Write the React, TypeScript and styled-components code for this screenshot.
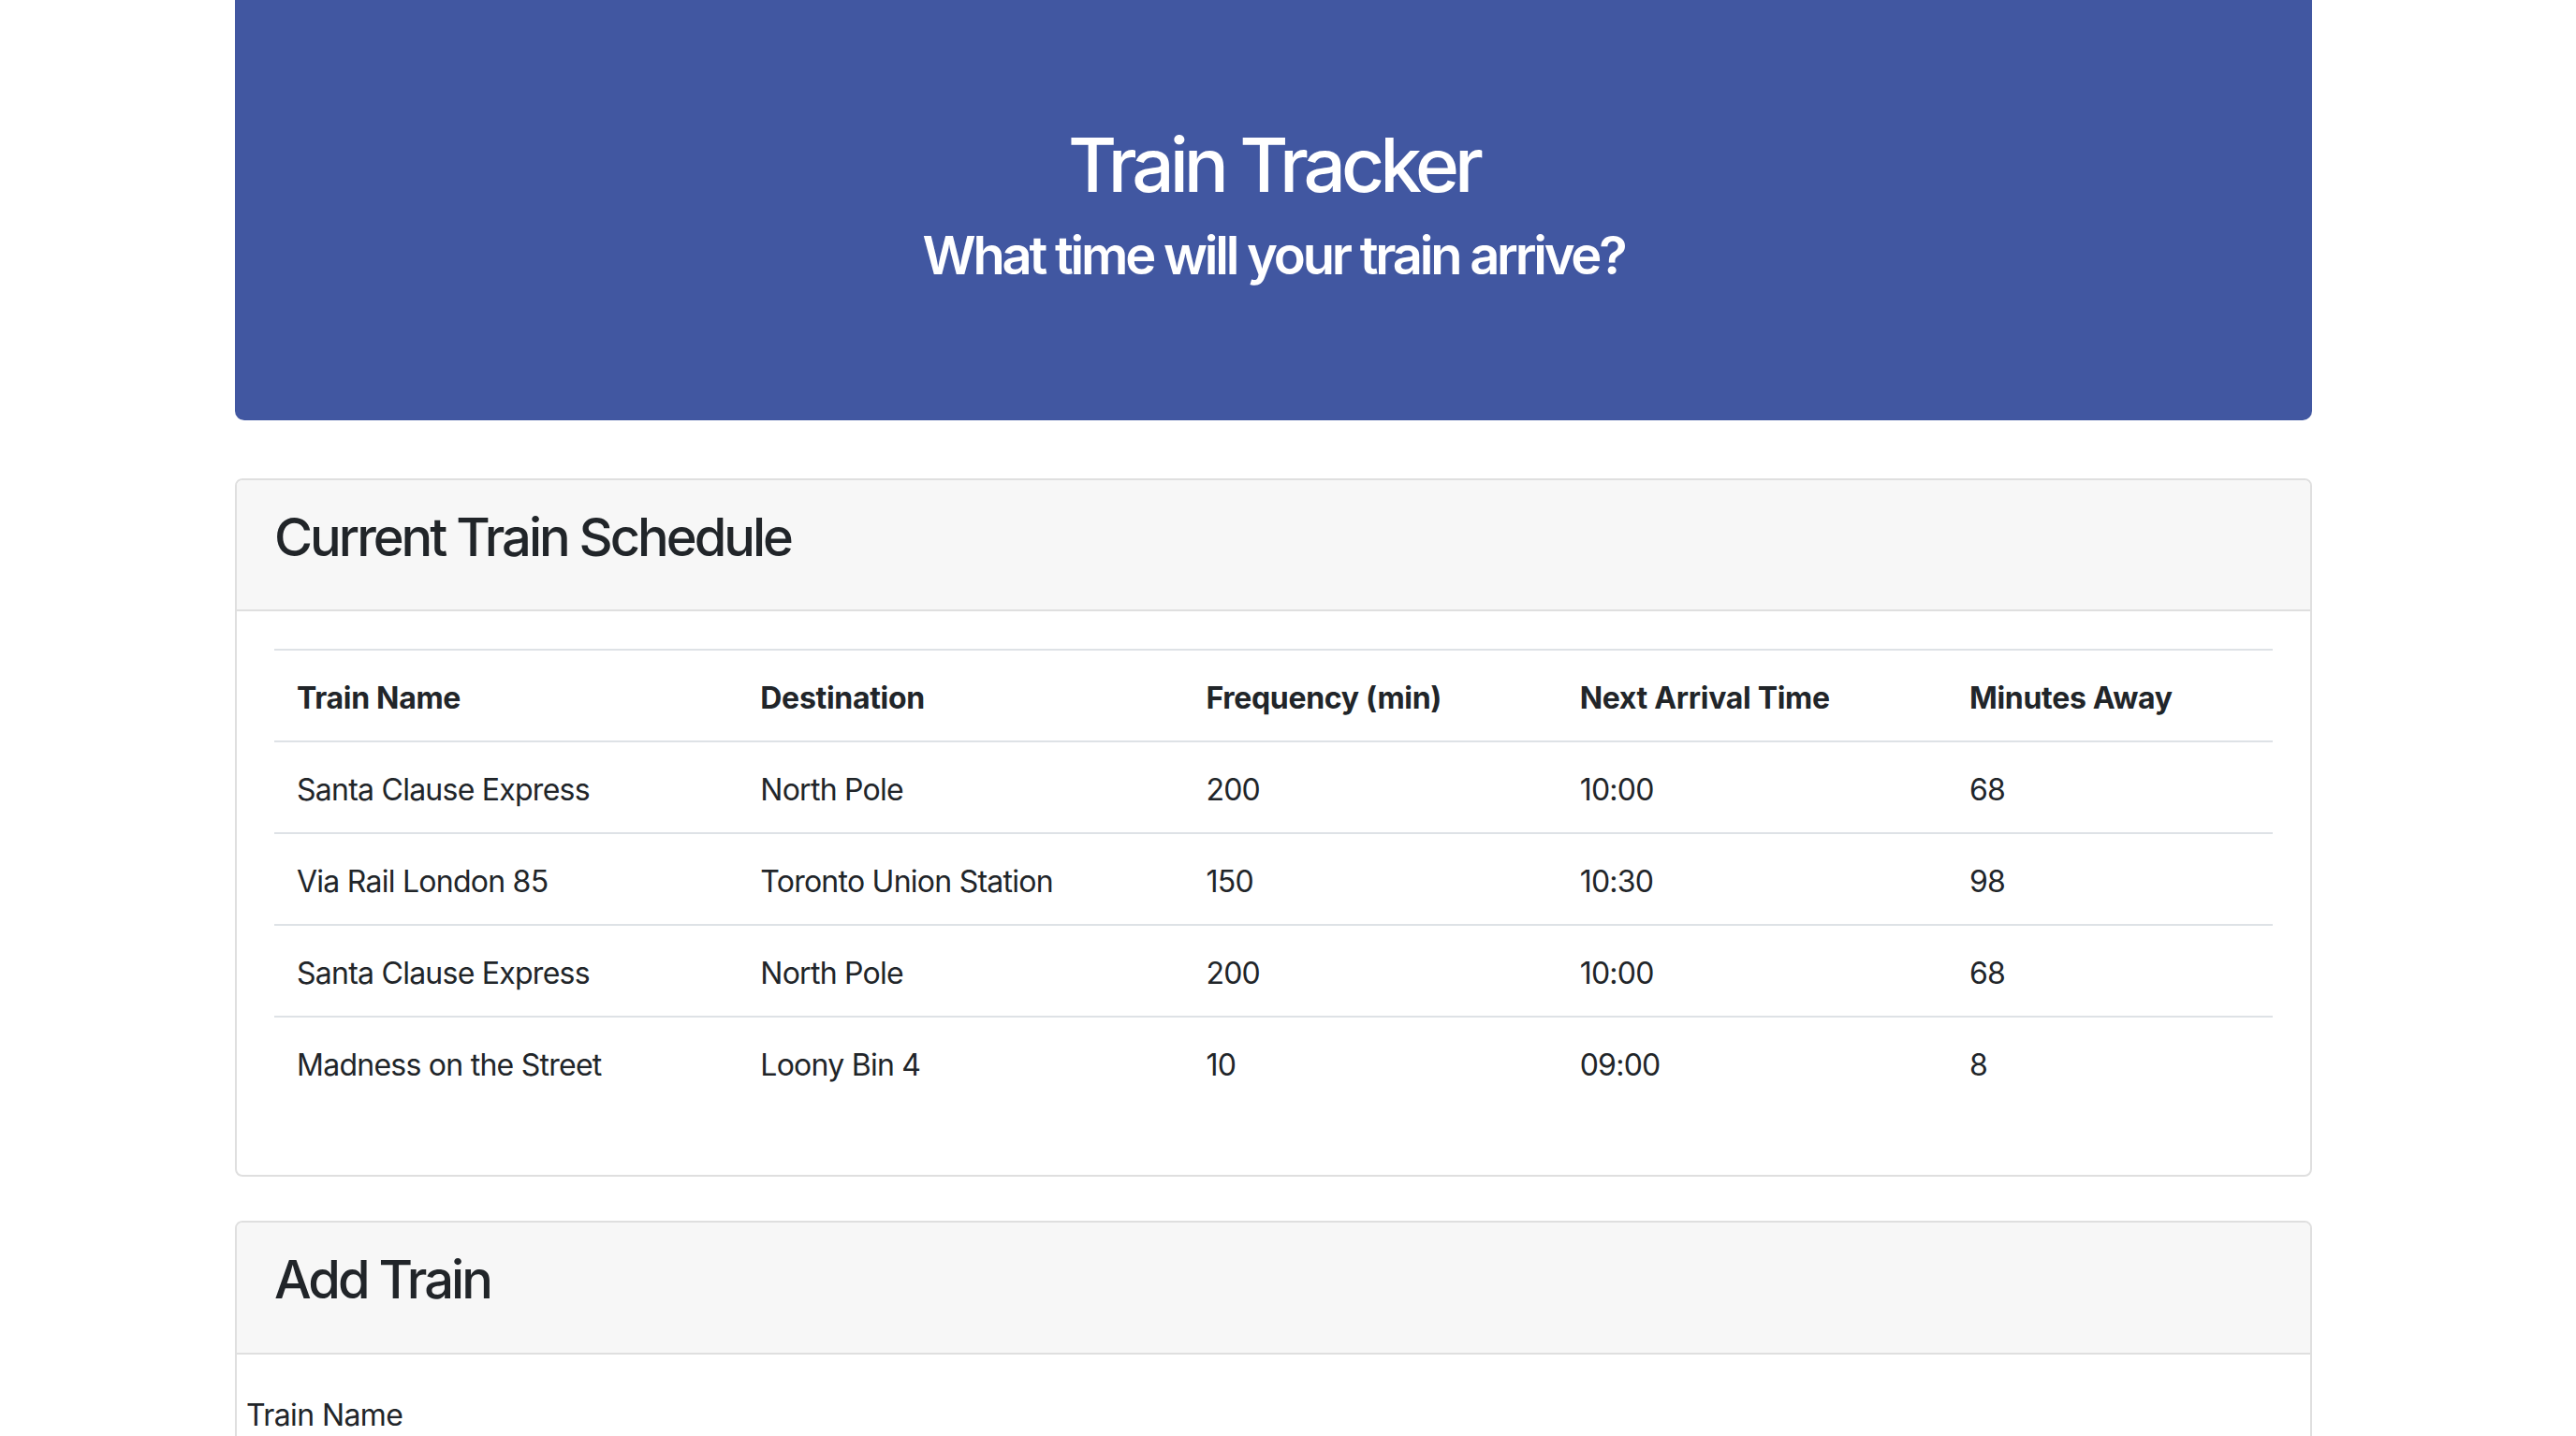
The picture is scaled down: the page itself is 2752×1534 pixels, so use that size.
import styled, { createGlobalStyle } from "styled-components"

type Train = {
    name: string;
    destination: string;
    frequency: number;
    nextArrival: string;
    minutesAway: number;
}

const trains: Train[] = [
    { name: "Santa Clause Express", destination: "North Pole", frequency: 200, nextArrival: "10:00", minutesAway: 68 },
    { name: "Via Rail London 85", destination: "Toronto Union Station", frequency: 150, nextArrival: "10:30", minutesAway: 98 },
    { name: "Santa Clause Express", destination: "North Pole", frequency: 200, nextArrival: "10:00", minutesAway: 68 },
    { name: "Madness on the Street", destination: "Loony Bin 4", frequency: 10, nextArrival: "09:00", minutesAway: 8 },
]

const columns = [
    { label: "Train Name", width: "23.2%" },
    { label: "Destination", width: "22.3%" },
    { label: "Frequency (min)", width: "18.7%" },
    { label: "Next Arrival Time", width: "19.5%" },
    { label: "Minutes Away", width: "16.3%" },
]

const fields = ["Train Name", "Destination", "First Train Time (HH:mm - military time)", "Frequency (min)"]

const App = () => {
    return (
        <>
            <GlobalStyle />
            <SContainer>
                <SJumbotron>
                    <STitle>Train Tracker</STitle>
                    <SSubtitle>What time will your train arrive?</SSubtitle>
                </SJumbotron>

                <SCard>
                    <SCardHeader>
                        <SCardTitle>Current Train Schedule</SCardTitle>
                    </SCardHeader>
                    <SCardBody>
                        <STable>
                            <thead>
                                <tr>
                                    {columns.map((col) => (
                                        <STh key={col.label} width={col.width}>{col.label}</STh>
                                    ))}
                                </tr>
                            </thead>
                            <tbody>
                                {trains.map((train, i) => (
                                    <tr key={i}>
                                        <STd>{train.name}</STd>
                                        <STd>{train.destination}</STd>
                                        <STd>{train.frequency}</STd>
                                        <STd>{train.nextArrival}</STd>
                                        <STd>{train.minutesAway}</STd>
                                    </tr>
                                ))}
                            </tbody>
                        </STable>
                    </SCardBody>
                </SCard>

                <SCard spaced>
                    <SCardHeader>
                        <SCardTitle>Add Train</SCardTitle>
                    </SCardHeader>
                    <SForm>
                        {fields.map((field) => (
                            <SFormGroup key={field}>
                                <SLabel>{field}</SLabel>
                                <SInput type="text" />
                            </SFormGroup>
                        ))}
                        <SButton type="button">Submit</SButton>
                    </SForm>
                </SCard>
            </SContainer>
        </>
    )
}

const GlobalStyle = createGlobalStyle`
    html, body {
        margin: 0;
        padding: 0;
        background: #ffffff;
    }
    body {
        font-family: Inter, "Liberation Sans", Arial, sans-serif;
        font-size: 32px;
        line-height: 1.5;
        color: #212529;
    }
    * {
        box-sizing: border-box;
    }
`

const SContainer = styled.div`
    width: 2219px;
    margin-left: 251px;
    padding-bottom: 64px;
`

const SJumbotron = styled.div`
    background-color: #4157a1;
    color: #ffffff;
    text-align: center;
    padding: 128px 64px 142px;
    border-radius: 0 0 10px 10px;
    margin-bottom: 62px;
`

const STitle = styled.h1`
    margin: 0 0 16px;
    font-size: 80px;
    font-weight: 500;
    line-height: 1.2;
    letter-spacing: -5px;
`

const SSubtitle = styled.h3`
    margin: 0;
    font-size: 56px;
    font-weight: 600;
    line-height: 1.2;
    letter-spacing: -3.2px;
`

const SCard = styled.div<{ spaced?: boolean }>`
    border: 2px solid #dfdfdf;
    border-radius: 8px;
    background: #ffffff;
    overflow: hidden;
    margin-top: ${({ spaced }) => (spaced ? '47px' : '0')};
`

const SCardHeader = styled.div`
    background-color: #f7f7f7;
    border-bottom: 2px solid #dfdfdf;
    padding: 28px 40px 27px;
`

const SCardTitle = styled.h3`
    margin: 0 0 16px;
    font-size: 56px;
    font-weight: 500;
    line-height: 1.2;
    letter-spacing: -3px;
`

const SCardBody = styled.div`
    padding: 40px;
`

const STable = styled.table`
    width: 100%;
    border-collapse: collapse;
    margin-bottom: 32px;
`

const STh = styled.th<{ width: string }>`
    width: ${({ width }) => width};
    text-align: left;
    font-weight: 700;
    padding: 27px 24px 21px;
    line-height: 48px;
    border-top: 2px solid #dee2e6;
    border-bottom: 2px solid #dee2e6;
    letter-spacing: -0.3px;
`

const STd = styled.td`
    padding: 27px 24px 21px;
    line-height: 48px;
    border-top: 2px solid #dee2e6;
    letter-spacing: -0.75px;
`

const SForm = styled.form`
    padding: 41px 10px 40px;
`

const SFormGroup = styled.div`
    margin-bottom: 32px;
`

const SLabel = styled.label`
    display: block;
    margin-bottom: 16px;
    letter-spacing: -0.6px;
`

const SInput = styled.input`
    display: block;
    width: 100%;
    height: 76px;
    padding: 12px 24px;
    font-size: 32px;
    font-family: inherit;
    color: #495057;
    border: 2px solid #ced4da;
    border-radius: 8px;
`

const SButton = styled.button`
    font-family: inherit;
    font-size: 32px;
    padding: 12px 24px;
    color: #ffffff;
    background: #007bff;
    border: none;
    border-radius: 8px;
`

export default App
